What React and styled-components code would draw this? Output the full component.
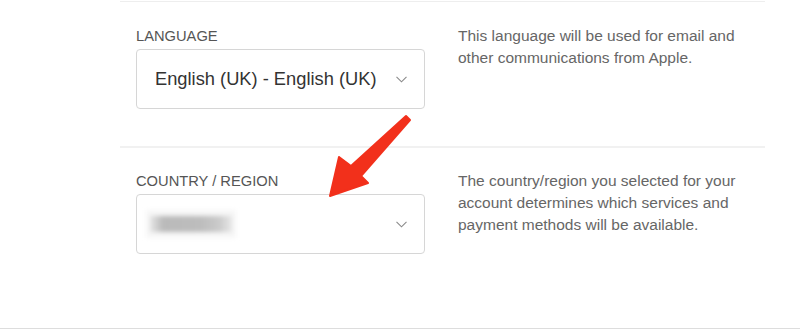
import React from "react";
import styled, { createGlobalStyle } from "styled-components";

const Global = createGlobalStyle`
  html, body { margin: 0; padding: 0; background: #fff; }
  body { font-family: "Liberation Sans", Arial, sans-serif; -webkit-font-smoothing: antialiased; }
`;

const Page = styled.div`
  position: relative;
  width: 800px;
  height: 330px;
  overflow: hidden;
  display: flex;
  flex-direction: column;
`;

const Panel = styled.div`
  margin: 1px 35px 0 120px;
  border-top: 1px solid #eeeeee;
  flex: 1;
`;

const Section = styled.div`
  display: grid;
  grid-template-columns: 289px 1fr;
  column-gap: 33px;
  padding: ${p => p.$pt}px 0 0 16px;
  height: ${p => p.$h}px;
  box-sizing: border-box;
  border-bottom: ${p => (p.$divider ? "2px solid #f1f1f1" : "none")};
`;

const Field = styled.div`
  display: flex;
  flex-direction: column;
`;

const Label = styled.div`
  font-size: 14.7px;
  line-height: 16px;
  color: #555;
  margin-bottom: 5px;
`;

const Select = styled.div`
  height: 60px;
  box-sizing: border-box;
  border: 1px solid #d6d6d6;
  border-radius: 4px;
  display: flex;
  align-items: center;
  justify-content: space-between;
  padding: 0 17px 0 18px;
  font-size: 18.3px;
  color: #333;
`;

const BlurWrap = styled.div`
  margin-left: -9px;
  padding: 6px 4px;
  background: #f6f6f6;
  filter: blur(2px);
  display: flex;
`;

const Blurred = styled.div`
  width: 82px;
  height: 16px;
  background: linear-gradient(90deg, #e6e6e6 0%, #bababa 16%, #bdbdbd 62%, #cacaca 84%, #e8e8e8 100%);
`;

const Desc = styled.p`
  margin: -3px 0 0 0;
  font-size: 15.5px;
  line-height: 22px;
  color: #666;
  max-width: 295px;
`;

const Footer = styled.div`
  height: 2px;
  background: #dddddd;
  margin-bottom: 1px;
`;

const ArrowSvg = styled.svg`
  position: absolute;
  left: 320px;
  top: 110px;
  overflow: visible;
`;

const Chevron = () => (
  <svg width="11" height="7" viewBox="0 0 11 7" fill="none">
    <path d="M0.5 0.8 L5.5 5.8 L10.5 0.8" stroke="#8a8a8a" strokeWidth="1.1" />
  </svg>
);

export default function App() {
  return (
    <Page>
      <Global />
      <Panel>
        <Section $pt={26} $h={146} $divider>
          <Field>
            <Label>LANGUAGE</Label>
            <Select>
              <span>English (UK) - English (UK)</span>
              <Chevron />
            </Select>
          </Field>
          <Desc>This language will be used for email and other communications from Apple.</Desc>
        </Section>
        <Section $pt={25} $h={180}>
          <Field>
            <Label>COUNTRY / REGION</Label>
            <Select>
              <BlurWrap>
                <Blurred />
              </BlurWrap>
              <Chevron />
            </Select>
          </Field>
          <Desc>The country/region you selected for your account determines which services and payment methods will be available.</Desc>
        </Section>
      </Panel>
      <Footer />
      <ArrowSvg width="100" height="100" viewBox="0 0 100 100">
        <path
          d="M86 6 L90 10 L41 66 L48 73 L10 86 L19 47 L31 56 Z"
          fill="#f2301b"
          stroke="#f2301b"
          strokeWidth="2"
          strokeLinejoin="round"
        />
      </ArrowSvg>
    </Page>
  );
}
